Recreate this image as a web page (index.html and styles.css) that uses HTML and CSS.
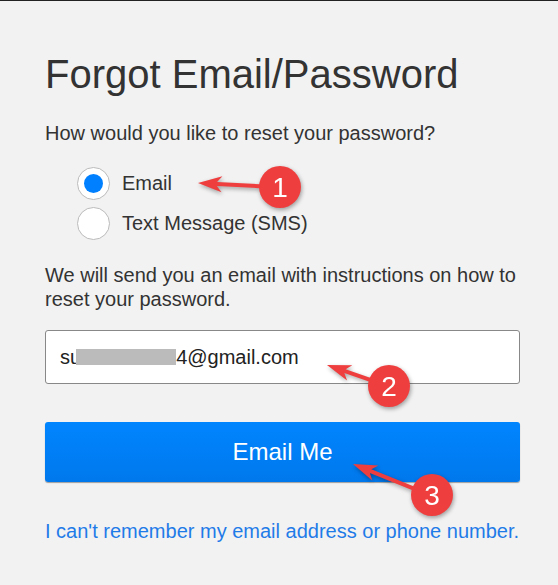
FILE: index.html
```html
<!DOCTYPE html>
<html lang="en">
<head>
  <meta charset="UTF-8">
  <meta name="viewport" content="width=device-width, initial-scale=1.0">
  <title>Forgot Email/Password</title>
  <link rel="stylesheet" href="styles.css">
</head>
<body>
  <div class="page">
    <h1>Forgot Email/Password</h1>
    <p class="question">How would you like to reset your password?</p>

    <div class="options">
      <label class="option">
        <input type="radio" name="method" value="email" checked>
        <span>Email</span>
      </label>
      <label class="option">
        <input type="radio" name="method" value="sms">
        <span>Text Message (SMS)</span>
      </label>
    </div>

    <p class="info">We will send you an email with instructions on how to reset your password.</p>

    <div class="email-field">su<span class="blur"></span>4@gmail.com</div>

    <button type="button" class="send">Email Me</button>

    <a class="help" href="#">I can't remember my email address or phone number.</a>
  </div>

  <!-- callouts drawn over the form -->
  <svg class="marks" width="558" height="585" viewBox="0 0 558 585">
    <g class="mark">
      <polygon transform="translate(198,183) rotate(3)" points="0,0 24,-8 19,-2 80,-2 80,2 19,2 24,8"/>
      <circle cx="280" cy="187" r="21"/>
      <text x="280" y="197">1</text>
    </g>
    <g class="mark">
      <polygon transform="translate(327,365) rotate(19)" points="0,0 24,-8 19,-2 64,-2 64,2 19,2 24,8"/>
      <circle cx="389" cy="386" r="21"/>
      <text x="389" y="396">2</text>
    </g>
    <g class="mark">
      <polygon transform="translate(353,464) rotate(22)" points="0,0 24,-8 19,-2 85,-2 85,2 19,2 24,8"/>
      <circle cx="432" cy="495" r="21"/>
      <text x="432" y="505">3</text>
    </g>
  </svg>
</body>
</html>
```

FILE: styles.css
```css
html, body {
  margin: 0;
  padding: 0;
}
body {
  font-family: 'Liberation Sans', Arial, sans-serif;
  background: #f2f2f2;
  color: #333;
  border-top: 1px solid #222;
  position: relative;
  height: 584px;
  overflow: hidden;
}
.page {
  width: 475px;
  padding: 0 38px 0 45px;
}
h1 {
  margin: 0;
  padding-top: 50px;
  font-size: 40px;
  font-weight: normal;
  line-height: 46px;
  color: #333;
}
.question {
  margin: 24px 0 0;
  font-size: 20px;
  line-height: 24px;
}
.options {
  margin: 22px 0 0 32px;
  display: flex;
  flex-direction: column;
  gap: 7px;
}
.option {
  display: flex;
  align-items: center;
  gap: 12px;
  font-size: 20px;
  color: #333;
}
.option input {
  appearance: none;
  -webkit-appearance: none;
  margin: 0;
  width: 33px;
  height: 33px;
  border: 1px solid #bbb;
  border-radius: 50%;
  background: #fff;
  box-sizing: border-box;
  display: grid;
  place-items: center;
}
.option input:checked::after {
  content: "";
  width: 19px;
  height: 19px;
  border-radius: 50%;
  background: #0080ff;
}
.info {
  margin: 23px 0 0;
  font-size: 20px;
  line-height: 24px;
}
.email-field {
  margin-top: 19px;
  height: 54px;
  box-sizing: border-box;
  border: 1px solid #888;
  border-radius: 3px;
  background: #fff;
  padding: 0 14px;
  display: flex;
  align-items: center;
  font-size: 20px;
  color: #222;
}
.blur {
  display: inline-block;
  width: 100px;
  height: 16px;
  margin-left: -5px;
  background: #bbb;
}
.send {
  display: block;
  width: 100%;
  height: 60px;
  margin-top: 38px;
  border: none;
  border-radius: 3px;
  background: linear-gradient(#0085ff, #0078ec);
  box-shadow: 0 1px 1px rgba(0,0,0,0.35);
  color: #fff;
  font-family: inherit;
  font-size: 24px;
}
.help {
  display: block;
  margin-top: 38px;
  font-size: 20px;
  color: #1f7be8;
  text-decoration: none;
  white-space: nowrap;
}
.marks {
  position: absolute;
  top: -1px;
  left: 0;
}
.mark {
  fill: #ef3e3e;
  filter: drop-shadow(1px 2px 2px rgba(0,0,0,0.35));
}
.mark text {
  fill: #fff;
  font-family: 'Liberation Sans', Arial, sans-serif;
  font-size: 28px;
  text-anchor: middle;
}
```
